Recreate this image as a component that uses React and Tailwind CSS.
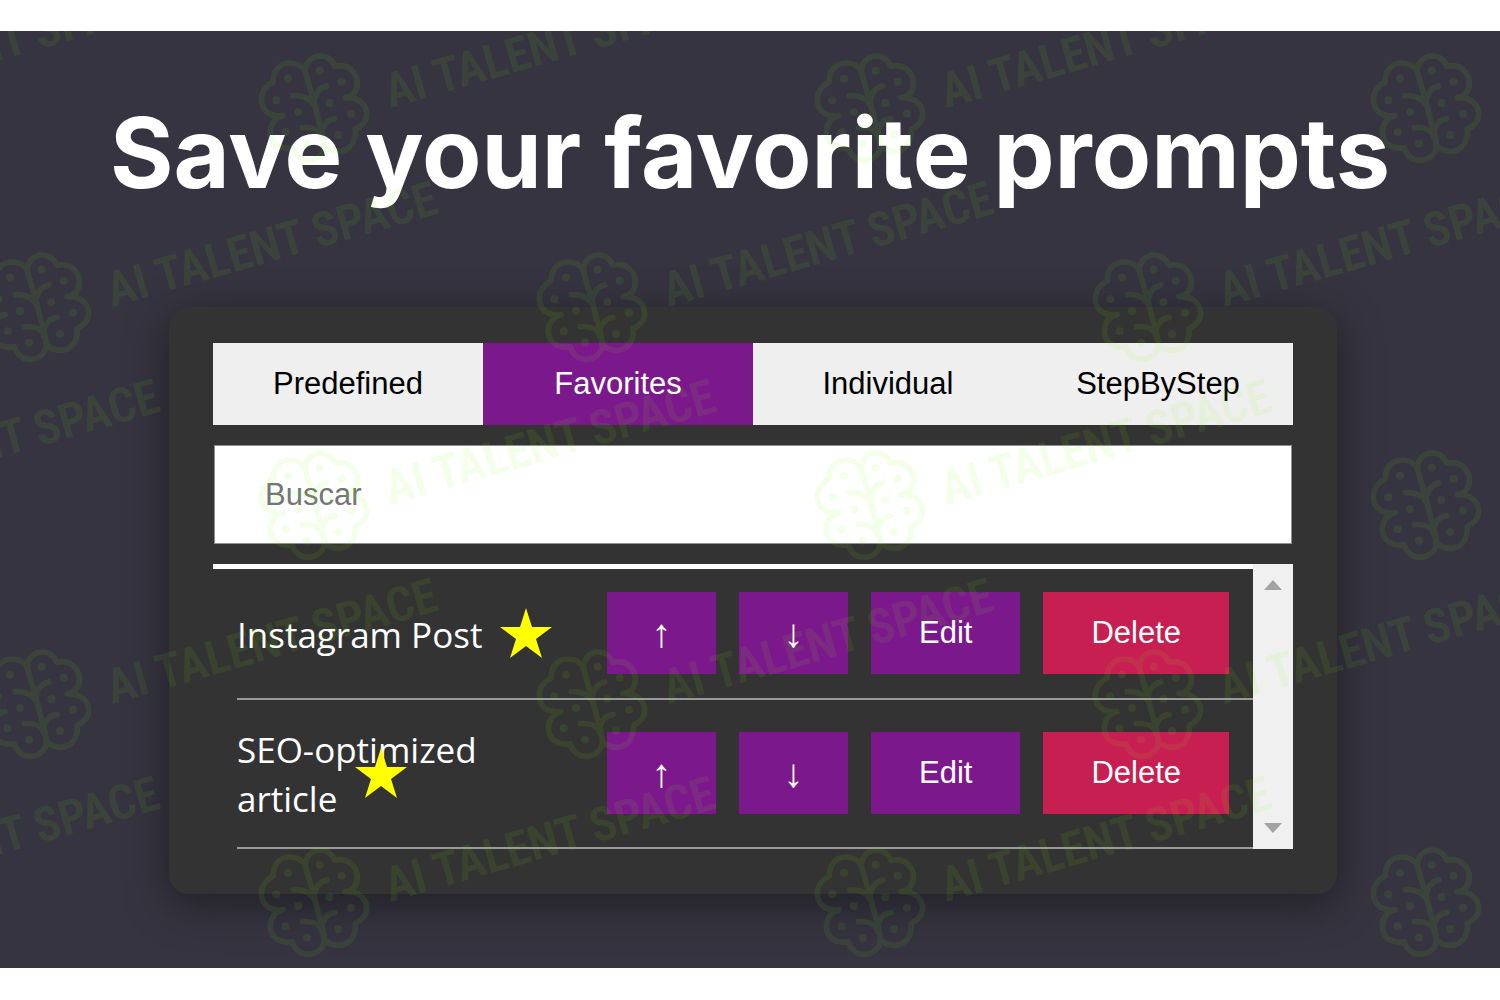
// Description: Promo slide for the prompt manager. Headline on top, below it the popup
// with its tabs, search box and favorites list. A tiled brand watermark covers the slide.

import { useState } from 'react'

const TABS = ['Predefined', 'Favorites', 'Individual', 'StepByStep']

const PROMPTS = ['Instagram Post', 'SEO-optimized article']

// Watermark grid: every second row is shifted by half a step
const MARKS = [0, 1, 2, 3, 4].flatMap((row) =>
  [-1, 0, 1, 2].map((col) => ({
    x: 314 + col * 556 - (row % 2) * 278,
    y: 77 + Math.round(row * 198.6),
  }))
)

const BRAIN_DOTS = [
  [132, 134],
  [227, 110],
  [293, 143],
  [97, 199],
  [256, 207],
  [162, 234],
  [321, 239],
  [125, 295],
  [189, 329],
  [282, 303],
]

function Brain() {
  return (
    <g transform="scale(0.3333) translate(-210 -222)">
      <g fill="none" stroke="currentColor" strokeWidth="17" strokeLinecap="round" strokeLinejoin="round">
        {/* Right half */}
        <path d="M184 113C184 86 203 66 228 66C250 66 265 79 272 97C311 88 340 114 340 148C340 172 324 190 303 191C342 188 368 211 368 241C368 260 355 277 334 286C337 327 313 352 284 352C265 352 250 345 241 333" />
        {/* Left half */}
        <path d="M184 113C175 96 158 87 138 87C108 87 86 110 88 144C66 154 52 175 52 198C52 229 80 252 117 245C93 250 79 271 79 294C79 327 107 348 144 341C153 366 170 379 192 379C220 379 241 360 241 333" />
        {/* Stem and folds */}
        <path d="M184 113C196 160 212 205 219 240C226 270 238 295 241 333" />
        <path d="M148 185C175 183 196 189 209 212C211 180 224 162 248 156" />
        <path d="M175 281C208 278 230 290 234 312C229 283 245 257 273 254" />
      </g>
      {BRAIN_DOTS.map(([cx, cy]) => (
        <circle key={`${cx}-${cy}`} cx={cx} cy={cy} r="12" fill="currentColor" />
      ))}
    </g>
  )
}

function Watermark() {
  return (
    <svg
      aria-hidden="true"
      className="pointer-events-none absolute inset-0 h-full w-full text-[#80ff00] opacity-[0.08]"
    >
      {MARKS.map(({ x, y }) => (
        <g key={`${x}-${y}`} transform={`translate(${x} ${y})`}>
          <Brain />
          <text
            transform="translate(76 0) rotate(-16)"
            fill="currentColor"
            className="font-['Roboto_Condensed','Liberation_Sans_Narrow',sans-serif] text-[48px] font-semibold"
          >
            AI TALENT SPACE
          </text>
        </g>
      ))}
    </svg>
  )
}

function Star() {
  return (
    <svg
      viewBox="0 0 52 50"
      className="absolute top-1/2 ml-[18px] inline h-[50px] w-[52px] -translate-y-1/2 fill-[#ffff00]"
    >
      <path d="M26 0L32 19H52L36 31L42 50L26 38L10 50L16 31L0 19H20Z" />
    </svg>
  )
}

function MoveButton({ label, children }) {
  return (
    <button
      type="button"
      aria-label={label}
      className="h-[82px] w-[109px] bg-[#7b198c] text-[40px] text-white"
    >
      {children}
    </button>
  )
}

function ActionButton({ danger, children }) {
  return (
    <button
      type="button"
      className={`h-[82px] px-12 text-[31px] text-white ${danger ? 'bg-[#c71f52]' : 'bg-[#7b198c]'}`}
    >
      {children}
    </button>
  )
}

function PromptRow({ name }) {
  return (
    <li className="ml-6 flex items-center justify-between border-b-2 border-[#999] pt-[23px] pr-6 pb-6">
      <div className="relative w-[300px] pt-[2px] font-['Open_Sans',sans-serif] text-[35px] leading-[49px] text-white">
        {name}
        <Star />
      </div>
      <div className="flex shrink-0 gap-[23px]">
        <MoveButton label="Move up">↑</MoveButton>
        <MoveButton label="Move down">↓</MoveButton>
        <ActionButton>Edit</ActionButton>
        <ActionButton danger>Delete</ActionButton>
      </div>
    </li>
  )
}

function ScrollBar() {
  return (
    <div className="flex w-10 shrink-0 flex-col items-center justify-between bg-[#f0f0f0] py-4">
      <button type="button" aria-label="Scroll up">
        <svg viewBox="0 0 18 10" className="h-[10px] w-[18px] fill-[#a3a3a3]">
          <path d="M9 0L18 10H0Z" />
        </svg>
      </button>
      <button type="button" aria-label="Scroll down">
        <svg viewBox="0 0 18 10" className="h-[10px] w-[18px] fill-[#a3a3a3]">
          <path d="M9 10L18 0H0Z" />
        </svg>
      </button>
    </div>
  )
}

export default function App() {
  const [tab, setTab] = useState('Favorites')
  const [query, setQuery] = useState('')

  const visible = PROMPTS.filter((name) => name.toLowerCase().includes(query.toLowerCase()))

  return (
    <main className="bg-white py-[31px] font-['Liberation_Sans',sans-serif]">
      <section className="relative overflow-hidden bg-[#353440] pt-[66px] pr-[163px] pb-[74px] pl-[169px]">
        <h1 className="-mr-24 -ml-[102px] text-center font-['Inter',sans-serif] text-[97px] leading-[112px] font-bold whitespace-nowrap text-white">
          Save your favorite prompts
        </h1>

        {/* Popup */}
        <div className="mt-[98px] rounded-[20px] bg-[#333] px-11 pt-9 pb-[45px] shadow-[0_10px_45px_rgba(0,0,0,0.4)]">
          <nav className="grid grid-cols-4">
            {TABS.map((name) => (
              <button
                key={name}
                type="button"
                onClick={() => setTab(name)}
                className={`h-[82px] text-[31px] ${
                  tab === name ? 'bg-[#7b198c] text-white' : 'bg-[#efefef] text-black'
                }`}
              >
                {name}
              </button>
            ))}
          </nav>

          <div className="px-px py-5">
            <input
              type="text"
              aria-label="Buscar"
              placeholder="Buscar"
              value={query}
              onChange={(e) => setQuery(e.target.value)}
              className="block h-[99px] w-full border border-[#8f8f8f] bg-white px-[50px] text-[31px] text-black placeholder:text-[#757575]"
            />
          </div>

          <div className="flex">
            <ul className="grow border-t-[5px] border-white">
              {visible.map((name) => (
                <PromptRow key={name} name={name} />
              ))}
            </ul>
            <ScrollBar />
          </div>
        </div>

        <Watermark />
      </section>
    </main>
  )
}
